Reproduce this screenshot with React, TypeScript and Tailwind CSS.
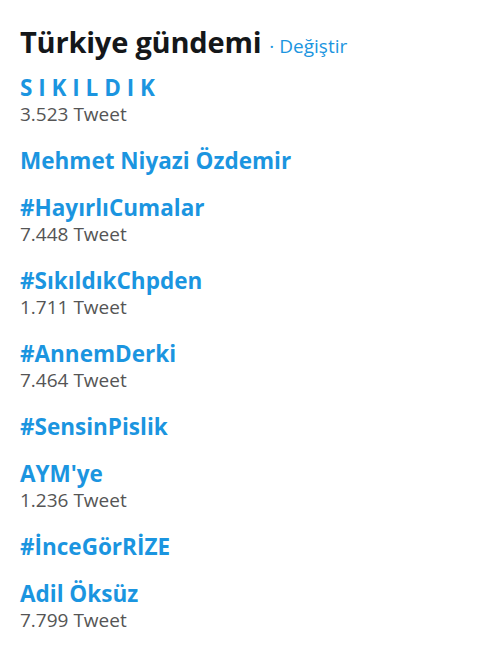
const trends: { name: string; count?: string }[] = [
  { name: 'S I K I L D I K', count: '3.523 Tweet' },
  { name: 'Mehmet Niyazi Özdemir' },
  { name: '#HayırlıCumalar', count: '7.448 Tweet' },
  { name: '#SıkıldıkChpden', count: '1.711 Tweet' },
  { name: '#AnnemDerki', count: '7.464 Tweet' },
  { name: '#SensinPislik' },
  { name: "AYM'ye", count: '1.236 Tweet' },
  { name: '#İnceGörRİZE' },
  { name: 'Adil Öksüz', count: '7.799 Tweet' },
];

export default function App() {
  return (
    <div className="w-[480px] h-[655px] bg-white pl-[20px] pt-[20px] font-['Open_Sans',sans-serif]">
      <div className="flex items-baseline h-[40px]">
        <h1 className="text-[29px] font-bold text-[#14171a] tracking-[-0.2px]">Türkiye gündemi</h1>
        <span className="ml-[8px] text-[19px] text-[#1b95e0]">· Değiştir</span>
      </div>
      <ul className="flex flex-col gap-[20px] mt-[14px]">
        {trends.map((t) => (
          <li key={t.name} className="flex flex-col">
            <span className="text-[22.5px] leading-[27px] font-bold text-[#1b95e0]">{t.name}</span>
            {t.count && <span className="text-[19px] leading-[26px] text-[#555]">{t.count}</span>}
          </li>
        ))}
      </ul>
    </div>
  );
}
